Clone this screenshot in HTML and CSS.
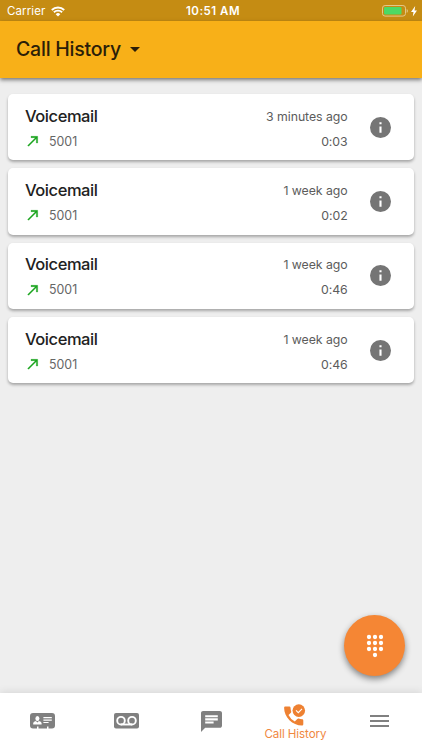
FILE: index.html
```html
<!doctype html>
<html>
<head>
<meta charset="utf-8">
<title>Call History</title>
<link rel="stylesheet" href="styles.css">
</head>
<body>
<div class="app">
	<div class="status">
		<div class="carrier">
			<span>Carrier</span>
			<svg class="wifi" viewBox="0 0 14 11"><path d="M7 10.6L4.7 8.2a3.3 3.3 0 0 1 4.6 0z" fill="#fff"/><path d="M2.9 6.3a5.9 5.9 0 0 1 8.2 0M.8 4a8.9 8.9 0 0 1 12.4 0" fill="none" stroke="#fff" stroke-width="1.9"/></svg>
		</div>
		<div class="clock">10:51 AM</div>
		<div class="power">
			<svg class="battery" viewBox="0 0 26 12"><rect x=".5" y=".5" width="23" height="10.6" rx="2.6" fill="none" stroke="#e3c88a"/><rect x="2" y="2" width="17.5" height="7.6" rx="1" fill="#4cd964"/><path d="M24.7 4v3.8q1.2-.6 1.2-1.9T24.7 4z" fill="#e3c88a"/></svg>
			<svg class="bolt" viewBox="0 0 6 11"><path d="M4.2 0L0 6h2.5L1.8 10.6 6 4.4H3.5z" fill="#fff"/></svg>
		</div>
	</div>
	<div class="header">
		<h1>Call History</h1>
		<span class="caret"></span>
	</div>
	<div class="calls">
		<div class="card">
			<div class="who">
				<div class="name">Voicemail</div>
				<div class="number"><svg class="arrow" viewBox="0 0 24 24"><path d="M9 5v2h6.59L4 18.59 5.41 20 17 8.41V15h2V5z"/></svg><span>5001</span></div>
			</div>
			<div class="when"><div>3 minutes ago</div><div>0:03</div></div>
			<svg class="info" viewBox="2 2 20 20"><path d="M12 2a10 10 0 1 0 0 20 10 10 0 0 0 0-20zm1 15h-2v-6h2v6zm0-8h-2V7h2v2z"/></svg>
		</div>
		<div class="card">
			<div class="who">
				<div class="name">Voicemail</div>
				<div class="number"><svg class="arrow" viewBox="0 0 24 24"><path d="M9 5v2h6.59L4 18.59 5.41 20 17 8.41V15h2V5z"/></svg><span>5001</span></div>
			</div>
			<div class="when"><div>1 week ago</div><div>0:02</div></div>
			<svg class="info" viewBox="2 2 20 20"><path d="M12 2a10 10 0 1 0 0 20 10 10 0 0 0 0-20zm1 15h-2v-6h2v6zm0-8h-2V7h2v2z"/></svg>
		</div>
		<div class="card">
			<div class="who">
				<div class="name">Voicemail</div>
				<div class="number"><svg class="arrow" viewBox="0 0 24 24"><path d="M9 5v2h6.59L4 18.59 5.41 20 17 8.41V15h2V5z"/></svg><span>5001</span></div>
			</div>
			<div class="when"><div>1 week ago</div><div>0:46</div></div>
			<svg class="info" viewBox="2 2 20 20"><path d="M12 2a10 10 0 1 0 0 20 10 10 0 0 0 0-20zm1 15h-2v-6h2v6zm0-8h-2V7h2v2z"/></svg>
		</div>
		<div class="card">
			<div class="who">
				<div class="name">Voicemail</div>
				<div class="number"><svg class="arrow" viewBox="0 0 24 24"><path d="M9 5v2h6.59L4 18.59 5.41 20 17 8.41V15h2V5z"/></svg><span>5001</span></div>
			</div>
			<div class="when"><div>1 week ago</div><div>0:46</div></div>
			<svg class="info" viewBox="2 2 20 20"><path d="M12 2a10 10 0 1 0 0 20 10 10 0 0 0 0-20zm1 15h-2v-6h2v6zm0-8h-2V7h2v2z"/></svg>
		</div>
	</div>
	<div class="dial">
		<svg viewBox="0 0 18 24"><g fill="#fff"><circle cx="3" cy="3" r="2.15"/><circle cx="9" cy="3" r="2.15"/><circle cx="15" cy="3" r="2.15"/><circle cx="3" cy="9" r="2.15"/><circle cx="9" cy="9" r="2.15"/><circle cx="15" cy="9" r="2.15"/><circle cx="3" cy="15" r="2.15"/><circle cx="9" cy="15" r="2.15"/><circle cx="15" cy="15" r="2.15"/><circle cx="9" cy="21" r="2.15"/></g></svg>
	</div>
	<div class="tabs">
		<div class="tab">
			<!-- contact card -->
			<svg width="25" height="16" viewBox="0 0 25 16"><path d="M3 0h19a3 3 0 0 1 3 3v9.5a3 3 0 0 1-3 3h-3.500v-2H17v2H8.500v-2H7v2H3a3 3 0 0 1-3-3V3a3 3 0 0 1 3-3z" fill="#808080"/><ellipse cx="7.4" cy="5.5" rx="2" ry="2.5" fill="#fff"/><path d="M3.2 11.5V10q.3-1.200 2.700-1.900l1.500 1.300 1.500-1.300q2.400.7 2.700 1.900v1.500z" fill="#fff"/><path d="M13.4 4.700h8.400M13.400 7.100h8.400M13.400 9.500h5.200" stroke="#fff" stroke-width="1.2"/></svg>
		</div>
		<div class="tab">
			<!-- voicemail tape -->
			<svg width="25" height="16" viewBox="0 0 25 16"><rect width="25" height="15.5" rx="2" fill="#808080"/><g fill="none" stroke="#fff" stroke-width="1.9"><circle cx="7" cy="7.7" r="3.8"/><circle cx="18" cy="7.7" r="3.8"/><path d="M7 11.5h11"/></g></svg>
		</div>
		<div class="tab">
			<svg width="21" height="21" viewBox="2 2 20 20"><path fill="#808080" d="M20 2H4c-1.100 0-2 .9-2 2v18l4-4h14c1.100 0 2-.9 2-2V4c0-1.100-.9-2-2-2zM6 6h12v2H6V6zm8 8H6v-2h8v2zm4-3H6V9h12v2z"/></svg>
		</div>
		<div class="tab active">
			<svg width="22" height="22" viewBox="0 0 22 22"><path fill="#ee8132" d="M1.200 2.500h4.200q1 0 1.100 1.100.1 2.100.7 3.900.2.600-.3 1.200L4.500 11q2 4.200 6.300 6.400l2.500-2.500q.5-.5 1.200-.3 1.800.6 3.700.7 1.100.1 1.100 1.200v3.800q0 1.200-1.200 1.200C8.400 21.500.1 13.200.1 3.700q0-1.200 1.100-1.200z"/><circle cx="14.8" cy="6.6" r="6.3" fill="#ee8132"/><path d="M12 6.300l2.300 2.300 3.700-3.700" fill="none" stroke="#fff" stroke-width="1.1"/></svg>
			<span>Call History</span>
		</div>
		<div class="tab">
			<svg width="19" height="14" viewBox="0 0 19 14"><path d="M0 2h19M0 7h19M0 12h19" stroke="#808080" stroke-width="2"/></svg>
		</div>
	</div>
</div>
</body>
</html>
```
FILE: styles.css
```css
body {
  margin: 0;
  font-family: Inter, "Liberation Sans", sans-serif;
}
svg {
  display: block;
  flex: none;
}
.app {
  position: relative;
  display: flex;
  flex-direction: column;
  width: 422px;
  height: 750px;
  overflow: hidden;
  background-color: #eee;
}
.status {
  display: grid;
  grid-template-columns: 1fr auto 1fr;
  align-items: center;
  box-sizing: border-box;
  height: 21px;
  padding: 1px 5px 0 7px;
  background-color: #c58c13;
  color: #fff;
  font-size: 11.5px;
}
.carrier {
  display: flex;
  align-items: center;
  gap: 6px;
  letter-spacing: 0.1px;
}
.wifi {
  width: 14px;
  height: 11px;
}
.clock {
  padding-left: 2px;
  font-weight: 600;
  letter-spacing: 0.5px;
}
.power {
  display: flex;
  justify-content: flex-end;
  align-items: center;
  gap: 3px;
}
.battery {
  width: 26px;
  height: 12px;
}
.bolt {
  width: 6px;
  height: 11px;
}
.header {
  display: flex;
  align-items: center;
  gap: 9px;
  box-sizing: border-box;
  height: 57px;
  padding: 0 16px 2px;
  background-color: #f8b018;
  box-shadow: 0 2px 4px rgba(0, 0, 0, 0.5);
}
h1 {
  margin: 0;
  font-size: 19.5px;
  font-weight: 500;
  line-height: 24px;
  letter-spacing: -0.22px;
  color: #2b1e08;
}
.caret {
  border: 5px solid transparent;
  border-top-color: #2b1e08;
  border-bottom: 0;
  margin-top: 1px;
}
.calls {
  display: flex;
  flex: 1;
  flex-direction: column;
  gap: 8.2px;
  padding: 16px 8.4px 0;
}
.card {
  display: flex;
  align-items: center;
  box-sizing: border-box;
  height: 66.2px;
  padding: 0 23px 0 16.6px;
  background-color: #fff;
  border-radius: 5px;
  box-shadow: 0 2px 3px rgba(0, 0, 0, 0.3);
}
.who {
  flex: 1;
  padding-top: 3px;
}
.name {
  font-size: 16.5px;
  font-weight: 500;
  line-height: 25px;
  letter-spacing: -0.45px;
  color: #212121;
}
.number {
  display: flex;
  align-items: center;
  gap: 8px;
  height: 25px;
  font-size: 12.4px;
  letter-spacing: 0;
  color: #666;
}
.arrow {
  width: 16px;
  height: 16px;
  fill: #17a31c;
  stroke: #17a31c;
  stroke-width: 0.5;
}
.when {
  margin-right: 22px;
  padding-top: 3px;
  text-align: right;
  font-size: 12.3px;
  line-height: 25px;
  letter-spacing: -0.05px;
  color: #5c5c5c;
}
.info {
  width: 21px;
  height: 21px;
  fill: #757575;
}
.dial {
  position: absolute;
  right: 17px;
  bottom: 74px;
  display: flex;
  align-items: center;
  justify-content: center;
  width: 61px;
  height: 61px;
  border-radius: 50%;
  background-color: #f58634;
  box-shadow: 0 3px 6px rgba(0, 0, 0, 0.45);
}
.dial svg {
  width: 18px;
  height: 24px;
}
.tabs {
  display: flex;
  box-sizing: border-box;
  height: 57px;
  padding-bottom: 1px;
  background-color: #fff;
  box-shadow: 0 -1px 8px rgba(0, 0, 0, 0.1);
}
.tab {
  display: flex;
  flex: 1;
  flex-direction: column;
  align-items: center;
  justify-content: center;
}
.active {
  gap: 1px;
  padding-top: 3px;
  font-size: 11.6px;
  line-height: 15px;
  letter-spacing: -0.1px;
  white-space: nowrap;
  color: #f0883f;
}
```
